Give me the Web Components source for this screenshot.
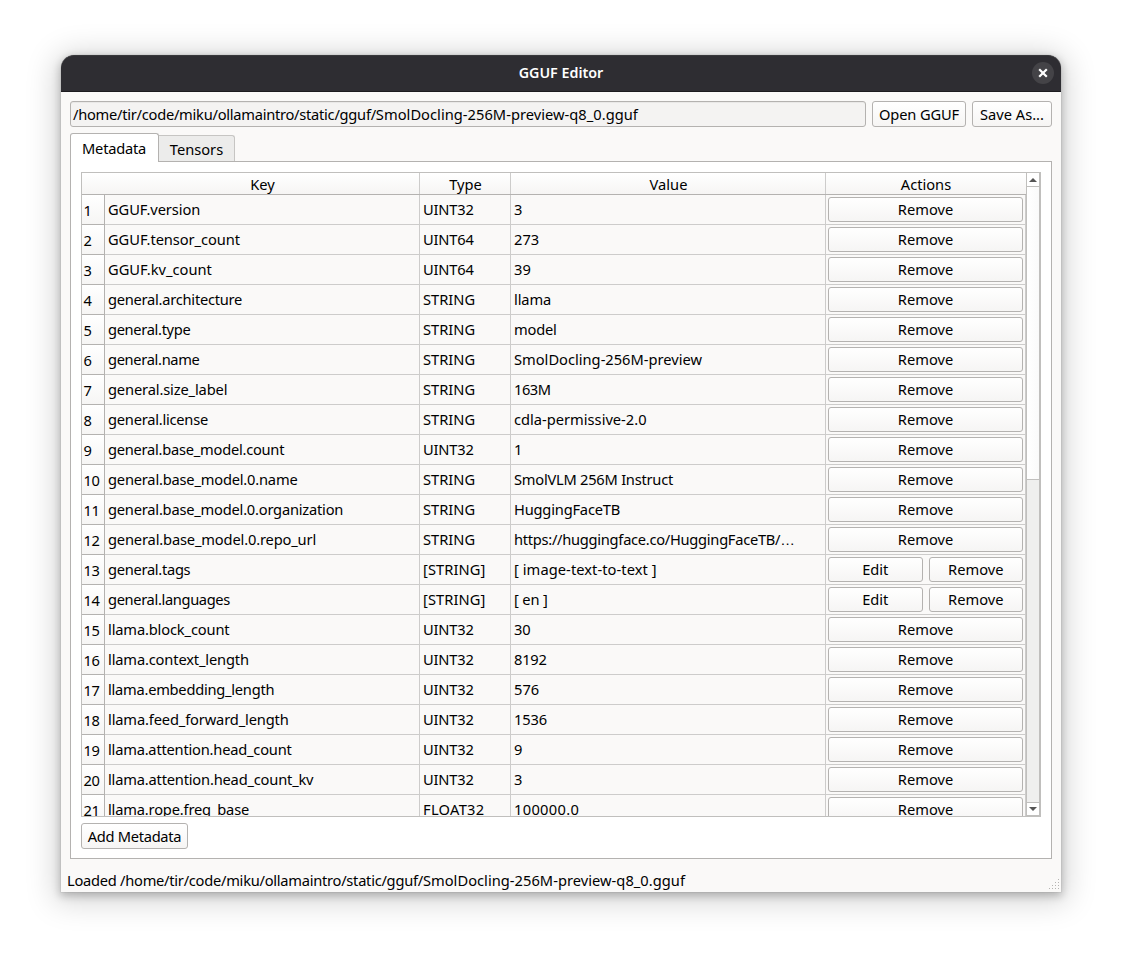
<!DOCTYPE html>
<html lang="en">
<head>
<meta charset="utf-8">
<title>GGUF Editor</title>
<style>
html,body{margin:0;height:100%;background:#fff;overflow:hidden}
body{font:14.667px/20px "Noto Sans","Open Sans",sans-serif;color:#000;box-sizing:border-box;padding:55px 61px 67px}
</style>
</head>
<body>
<app-window></app-window>
<script>
const define = (name, html, setup) => customElements.define(name, class extends HTMLElement {
  constructor() {
    super();
    this.attachShadow({mode: 'open'}).innerHTML = html;
  }
  connectedCallback() { if (setup) setup(this, this.shadowRoot); }
});

define('title-bar', `<style>
:host{display:grid;grid-template-columns:36px 1fr 36px;align-items:center;height:37px;box-sizing:border-box;background:#2e2d32;border-bottom:1px solid #1c1b1f;border-top:1px solid #38383b;border-radius:13px 13px 0 0;color:#fff;font-size:14.3px}
b{grid-column:2;text-align:center;font-weight:600;padding-bottom:2px}
svg{display:block;justify-self:end;margin:0 7px 1px 0}
</style><b><slot></slot></b><svg width="22" height="22" viewBox="0 0 22 22"><circle cx="11" cy="11" r="11" fill="#444347"/><path d="M7.2 7.2l7.6 7.6M14.8 7.2l-7.6 7.6" stroke="#fff" stroke-width="2.2"/></svg>`);

define('push-button', `<style>
:host{display:flex;align-items:center;justify-content:center;box-sizing:border-box;height:26px;border:1px solid #b4b2b0;border-radius:3px;background:linear-gradient(#fff,#f6f5f4);white-space:nowrap}
</style><span><slot></slot></span>`);

define('path-field', `<style>
:host{display:flex;align-items:center;flex:1;box-sizing:border-box;height:26px;border:1px solid #b4b2b0;border-radius:3px;background:#f4f3f2;padding-left:2px;white-space:nowrap;box-shadow:inset 0 1px #e9e8e7}
</style><span><slot></slot></span>`);

define('tab-item', `<style>
:host{display:flex;box-sizing:border-box;height:26px;width:76px;border:1px solid #c6c5c3;border-bottom:0;border-left:0;border-radius:0 3px 0 0;background:#ececeb;justify-content:center;padding-top:3px}
:host([active]){height:29px;width:89px;background:#fff;border:1px solid #b4b2b0;border-bottom:0;border-radius:3px 3px 0 0;padding:4px 1px 0 0;letter-spacing:-.25px}
</style><span><slot></slot></span>`);

define('scroll-bar', `<style>
:host{display:grid;grid-template-rows:13px 294px 1fr 14px;width:14px;box-sizing:border-box;border-left:1px solid #c0bfbd;border-right:1px solid #c0bfbd;background:#efefee}
.a{background:#fff;display:flex;justify-content:center;align-items:center}
.h{background:linear-gradient(90deg,#fff,#fafafa);border:solid #c0bfbd;border-width:1px 0}
.d{border-top:1px solid #c0bfbd;border-bottom:1px solid #c0bfbd}
svg{display:block}
</style><div class="a"><svg width="8" height="4"><path d="M4 0L8 4H0z" fill="#555"/></svg></div><div class="h"></div><div></div><div class="a d"><svg width="8" height="4"><path d="M4 4L8 0H0z" fill="#555"/></svg></div>`);

define('meta-row', `<style>
:host{display:grid;grid-template-columns:23px 315px 91px 315px 200px;height:30px;background:#faf9f8;white-space:nowrap}
div{box-sizing:border-box;border-right:1px solid #cdcccb;border-bottom:1px solid #cdcccb;padding:4px 0 0 3px}
.n{border-color:#b4b2b0;background:linear-gradient(#fff,#f6f5f4);padding:5px 0 0 1.5px;letter-spacing:-.4px}
.e{font-family:"Liberation Sans",sans-serif;letter-spacing:0;line-height:1}
.act{display:flex;gap:6px;padding:2px 2px 0}
push-button{flex:1;height:25px;padding-bottom:1px}
</style><div class="n"></div><div class="k"></div><div class="t"></div><div class="v"></div><div class="act"></div>`,
(host, root) => {
  const set = (c, v, track) => {
    const cell = root.querySelector(c);
    cell.textContent = v;
    if (track) cell.style.letterSpacing = (track / v.length).toFixed(3) + 'px';
  };
  const {num, key, type, value, kt, vt} = host.row;
  set('.n', String(num));
  set('.k', key, kt);
  set('.t', type, type === 'FLOAT32' ? 2 : type === '[STRING]' ? .6 : type[0] === 'U' ? -1 : 0);
  set('.v', value, vt);
  if (value.endsWith('…')) {
    const cell = root.querySelector('.v');
    cell.innerHTML = value.slice(0, -1) + '<span class="e">…</span>';
  }
  root.querySelector('.act').innerHTML =
    (type[0] === '[' ? '<push-button>Edit</push-button>' : '') + '<push-button>Remove</push-button>';
});

/* key, type, value, key tracking, value tracking (total px over the text) */
const ROWS = [
['GGUF.version','UINT32','3',-1,0],['GGUF.tensor_count','UINT64','273',-1,0],['GGUF.kv_count','UINT64','39',0,0],
['general.architecture','STRING','llama',-5,-.5],['general.type','STRING','model',-4,-1],
['general.name','STRING','SmolDocling-256M-preview',-4,0],['general.size_label','STRING','163M',-2.5,-2],
['general.license','STRING','cdla-permissive-2.0',-3.5,0],['general.base_model.count','UINT32','1',-6,0],
['general.base_model.0.name','STRING','SmolVLM 256M Instruct',-5,-5],
['general.base_model.0.organization','STRING','HuggingFaceTB',-7,-2.5],
['general.base_model.0.repo_url','STRING','https://huggingface.co/HuggingFaceTB/…',-4.5,-10.5],
['general.tags','[STRING]','[ image-text-to-text ]',-3.5,1.5],['general.languages','[STRING]','[ en ]',-6,-1],
['llama.block_count','UINT32','30',-2.5,-.5],['llama.context_length','UINT32','8192',-3,-1],
['llama.embedding_length','UINT32','576',-5.5,0],['llama.feed_forward_length','UINT32','1536',-3.5,-.5],
['llama.attention.head_count','UINT32','9',-5.5,0],['llama.attention.head_count_kv','UINT32','3',-5.5,0],
['llama.rope.freq_base','FLOAT32','100000.0',-3.5,2.5]];

define('meta-table', `<style>
:host{display:grid;grid-template-columns:944px 14px;height:645px;box-sizing:border-box;border:1px solid #c0bfbd;background:#faf9f8;overflow:hidden}
.main{overflow:hidden;height:643px}
.head{display:grid;grid-template-columns:23px 315px 91px 315px 200px;height:22px;box-sizing:border-box;border-bottom:1px solid #b4b2b0;background:linear-gradient(#fff,#f6f5f4);text-align:center}
.head span{border-right:1px solid #cdcccb;padding:1px 0 0 1px;height:20px}
.head span:first-child,.head span:last-child{border-right-color:transparent}
</style><div class="main"><div class="head"><span></span><span>Key</span><span>Type</span><span>Value</span><span>Actions</span></div><section></section></div><scroll-bar></scroll-bar>`,
(host, root) => {
  const body = root.querySelector('section');
  ROWS.forEach(([key, type, value, kt, vt], i) => {
    const row = document.createElement('meta-row');
    row.row = {num: i + 1, key, type, value, kt, vt};
    body.append(row);
  });
});

define('status-bar', `<style>
:host{display:flex;justify-content:space-between;align-items:flex-end;flex:1;padding:0 2px 2px 6px}
svg{display:block;margin-right:-1px}
</style><span><slot></slot></span><svg width="11" height="11" fill="#b5b4b2"><path d="M9 0h1v1h-1zM6 3h1v1h-1zM9 3h1v1h-1zM3 6h1v1h-1zM6 6h1v1h-1zM9 6h1v1h-1zM0 9h1v1h-1zM3 9h1v1h-1zM6 9h1v1h-1zM9 9h1v1h-1z"/></svg>`);

define('app-window', `<style>
:host{display:flex;flex-direction:column;width:1000px;height:837px;background:#faf9f8;border-radius:13px 13px 0 0;box-shadow:0 0 0 .5px rgba(0,0,0,.08),0 3px 9px 1px rgba(0,0,0,.22),0 4px 30px 6px rgba(0,0,0,.17)}
.bar{display:flex;gap:6px;padding:9px 9px 0}
.open{width:94px;letter-spacing:-.15px}.save{width:80px}
.dir{letter-spacing:-.26px}.file{letter-spacing:.03px}
.tabs{display:flex;align-items:flex-end;padding:6px 9px 0;height:28px}
.tabs tab-item[active]{margin-bottom:-1px;z-index:1}
.pane{margin:0 9px;box-sizing:border-box;height:698px;border:1px solid #b4b2b0;background:#fff;padding:10px}
.add{width:107px;margin-top:6px;letter-spacing:-.3px}
</style>
<title-bar>GGUF Editor</title-bar>
<div class="bar"><path-field><span class="dir">/home/tir/code/miku/ollamaintro/static/gguf/</span><span class="file">SmolDocling-256M-preview-q8_0.gguf</span></path-field><push-button class="open">Open GGUF</push-button><push-button class="save">Save As...</push-button></div>
<div class="tabs"><tab-item active>Metadata</tab-item><tab-item>Tensors</tab-item></div>
<div class="pane"><meta-table></meta-table><push-button class="add">Add Metadata</push-button></div>
<status-bar><span class="dir">Loaded /home/tir/code/miku/ollamaintro/static/gguf/</span><span class="file">SmolDocling-256M-preview-q8_0.gguf</span></status-bar>`);
</script>
</body>
</html>
